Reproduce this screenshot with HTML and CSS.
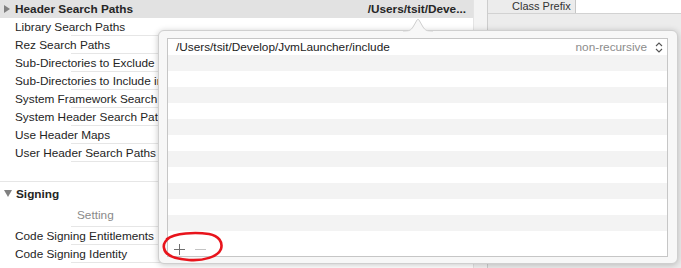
FILE: index.html
```html
<!DOCTYPE html>
<html>
<head>
<meta charset="utf-8">
<link rel="stylesheet" href="styles.css">
</head>
<body>
<div class="screen">
  <div class="editor">
    <div class="left">
      <div class="group-row">
        <span class="tri-right"></span>
        <span class="gname">Header Search Paths</span>
        <span class="gval">/Users/tsit/Deve...</span>
      </div>
      <div class="row">Library Search Paths</div>
      <div class="row">Rez Search Paths</div>
      <div class="row">Sub-Directories to Exclude in Recursive Searches</div>
      <div class="row">Sub-Directories to Include in Recursive Searches</div>
      <div class="row">System Framework Search Paths</div>
      <div class="row">System Header Search Paths</div>
      <div class="row">Use Header Maps</div>
      <div class="row">User Header Search Paths</div>
      <div class="spacer"></div>
      <div class="section"><span class="tri-down"></span><span class="sname">Signing</span></div>
      <div class="colhead">Setting</div>
      <div class="row">Code Signing Entitlements</div>
      <div class="row">Code Signing Identity</div>
    </div>
    <div class="gutter"></div>
    <div class="right">
      <div class="prefix">
        <span class="plabel">Class Prefix</span>
        <div class="field"></div>
      </div>
      <div class="rbody"></div>
    </div>
  </div>

  <div class="popover">
    <svg class="arrow" width="30" height="14" viewBox="0 0 30 14">
      <path d="M0 13.5 C6 13.5 8 12 10 9 L14 2 C14.5 1.2 15.5 1.2 16 2 L20 9 C22 12 24 13.5 30 13.5" fill="#f7f7f7" stroke="#cfcfcf" stroke-width="1"/>
      <rect x="0" y="13.5" width="30" height="1" fill="#f7f7f7"/>
    </svg>
    <div class="table">
      <div class="trow first">
        <span class="path">/Users/tsit/Develop/JvmLauncher/include</span>
        <span class="mode">non-recursive</span>
        <svg class="stepper" width="8" height="11" viewBox="0 0 8 11">
          <path d="M1 4 L4 1 L7 4 M1 7 L4 10 L7 7" fill="none" stroke="#555" stroke-width="1.1"/>
        </svg>
      </div>
      <div class="trow alt"></div>
      <div class="trow"></div>
      <div class="trow alt"></div>
      <div class="trow"></div>
      <div class="trow alt"></div>
      <div class="trow"></div>
      <div class="trow alt"></div>
      <div class="trow"></div>
      <div class="trow alt"></div>
      <div class="trow"></div>
      <div class="trow alt"></div>
      <div class="tfoot">
        <svg class="btn" width="13" height="13" viewBox="0 0 13 13">
          <path d="M6.5 1 V12 M1 6.5 H12" stroke="#6f6f6f" stroke-width="1"/>
        </svg>
        <svg class="btn" width="13" height="13" viewBox="0 0 13 13">
          <path d="M1 6.5 H12" stroke="#c4c4c4" stroke-width="1"/>
        </svg>
      </div>
    </div>
  </div>

  <svg class="annot" width="64" height="34" viewBox="0 0 64 34">
    <path d="M6 9 C14 3 34 2 48 4 C58 6 62 12 60 19 C57 27 42 31 28 30 C14 29 4 25 3 18 C2 14 4 11 8 8" fill="none" stroke="#e8141c" stroke-width="2.6" stroke-linecap="round"/>
  </svg>
</div>
</body>
</html>
```

FILE: styles.css
```css
* { box-sizing: border-box; }
html, body { margin: 0; padding: 0; }
body {
  width: 681px;
  height: 268px;
  overflow: hidden;
  background: #ffffff;
  font-family: "Liberation Sans", Arial, sans-serif;
  font-size: 11.8px;
  color: #242424;
}
.screen {
  position: relative;
  width: 681px;
  height: 268px;
  overflow: hidden;
}
.editor {
  display: flex;
  height: 268px;
}
.left {
  width: 473px;
  background: #fff;
  display: flex;
  flex-direction: column;
  white-space: nowrap;
  overflow: hidden;
}
.group-row {
  height: 18px;
  background: #e2e2e2;
  display: flex;
  align-items: center;
  padding-left: 4px;
  padding-right: 7px;
  font-weight: bold;
  color: #262626;
}
.tri-right {
  width: 0; height: 0;
  border-left: 6px solid #808080;
  border-top: 4px solid transparent;
  border-bottom: 4px solid transparent;
  margin-right: 5px;
}
.gname { flex: 1; }
.row {
  height: 18px;
  line-height: 18px;
  padding-left: 15px;
  background: linear-gradient(#e6e6e6, #e6e6e6) 71px 100% / calc(100% - 71px) 1px no-repeat;
}
.spacer {
  height: 20px;
  border-bottom: 1px solid #e6e6e6;
}
.section {
  height: 23px;
  display: flex;
  align-items: center;
  padding-left: 4px;
  font-weight: bold;
}
.tri-down {
  width: 0; height: 0;
  border-top: 7px solid #808080;
  border-left: 4px solid transparent;
  border-right: 4px solid transparent;
  margin-right: 4px;
}
.colhead {
  height: 22px;
  line-height: 20px;
  padding-left: 77px;
  color: #8a8a8a;
  background: linear-gradient(#e6e6e6, #e6e6e6) 71px 100% / calc(100% - 71px) 1px no-repeat;
}
.gutter {
  width: 15px;
  background: #f3f3f3;
  border-left: 1px solid #e4e4e4;
  border-right: 1px solid #cdcdcd;
}
.right {
  flex: 1;
  background: #ececec;
  display: flex;
  flex-direction: column;
}
.prefix {
  height: 14px;
  display: flex;
  align-items: flex-start;
  padding-left: 24px;
  border-bottom: 1px solid #d2d2d2;
}
.plabel {
  font-size: 11px;
  line-height: 13px;
  color: #333;
  white-space: nowrap;
  margin-right: 4px;
}
.field {
  flex: 1;
  height: 13px;
  background: #fff;
  border-left: 1px solid #c6c6c6;
}
.rbody { flex: 1; }

.popover {
  position: absolute;
  left: 158px;
  top: 30px;
  width: 520px;
  height: 234px;
  background: #f7f7f7;
  border: 1px solid #cfcfcf;
  border-radius: 6px;
  box-shadow: 0 1px 6px rgba(0,0,0,0.22);
  padding: 7px 9px 7px 8px;
}
.arrow {
  position: absolute;
  left: 244px;
  top: -13px;
}
.table {
  border: 1px solid #c6c6c6;
  background: #fff;
  height: 219px;
  display: flex;
  flex-direction: column;
}
.trow {
  height: 16px;
  flex: none;
  background: #fff;
}
.trow.alt { background: #f3f3f3; }
.trow.first {
  display: flex;
  align-items: center;
  padding-left: 8px;
  padding-right: 4px;
}
.path { flex: 1; color: #222; }
.mode { color: #8c8c8c; margin-right: 8px; }
.stepper { display: block; }
.tfoot {
  flex: 1;
  display: flex;
  align-items: center;
  gap: 4px;
  padding-left: 5px;
  padding-top: 11px;
}
.btn { display: block; }
.btn + .btn { margin-left: 4px; }
.annot {
  position: absolute;
  left: 161px;
  top: 230px;
}
```
